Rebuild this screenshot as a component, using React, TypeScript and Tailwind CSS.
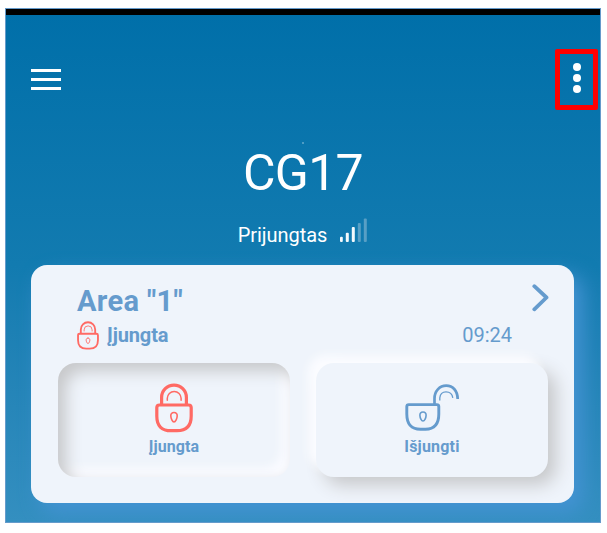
import React from "react";

function ClosedLock({ className }: { className: string }) {
  return (
    <svg viewBox="0 0 38 50" className={className} fill="none" stroke="#ff6a64" strokeLinecap="round">
      <path d="M6.6 21.5V14.5a12.4 12.4 0 0 1 24.8 0v7" strokeWidth="3.2" strokeLinecap="butt" />
      <path d="M4.5 22H33.5Q36.2 22 36.2 24.7V33Q36.2 47.7 22 47.7H16Q1.8 47.7 1.8 33V24.7Q1.8 22 4.5 22Z" strokeWidth="3.2" />
      <path d="M12.3 17.3v-2a6.9 6.9 0 0 1 13.8 0v2" strokeWidth="1.5" />
      <path d="M19 29.5c-2.2 0-3.3 1.5-3.2 3.5.1 2.3 1.6 5.9 3.2 5.9s3.1-3.6 3.2-5.9c.1-2-1-3.5-3.2-3.5Z" strokeWidth="1.6" />
    </svg>
  );
}

function OpenLock() {
  return (
    <svg viewBox="0 0 55 50" className="ml-px block h-[50px] w-[55px]" fill="none" stroke="#659bcd">
      <path d="M29.5 20.5V14.5c0-7.2 5-12.8 11.7-12.8 6.8 0 11.3 5 11.5 13.3" strokeWidth="2.7" />
      <path d="M3.8 20.6H31.8Q33.8 20.6 33.8 22.6V30Q33.8 45.2 20.5 45.2H15.5Q1.8 45.2 1.8 30V22.6Q1.8 20.6 3.8 20.6Z" strokeWidth="2.9" />
      <path d="M34.8 16.5v-2.6c.4-3.7 2.7-6 6.2-6 3.8 0 6.3 2.5 6.8 6" strokeWidth="1.3" />
      <path d="M18 28c-2.2 0-3.2 1.4-3.1 3.4.1 2.3 1.5 5.6 3.1 5.6s3-3.3 3.1-5.6c.1-2-.9-3.4-3.1-3.4Z" strokeWidth="1.6" />
    </svg>
  );
}

function Signal() {
  return (
    <svg viewBox="0 0 30 24" className="mt-[-1px] h-6 w-[30px]">
      <g fill="#f3f9fc">
        <rect x="1" y="18.7" width="2.8" height="5.3" rx="1" />
        <rect x="6.8" y="14.7" width="3" height="9.3" rx="1" />
        <rect x="12.8" y="9" width="3" height="15" rx="1" />
      </g>
      <g fill="#589fc5">
        <rect x="18.8" y="5" width="3" height="19" rx="1" />
        <rect x="24.8" y="0.5" width="3" height="23.5" rx="1" />
      </g>
    </svg>
  );
}

export default function App() {
  return (
    <div className="h-[533px] w-[607px] overflow-hidden bg-white pl-[5px] pt-2 font-['Roboto','Liberation_Sans',sans-serif]">
      <div className="h-[515px] w-[596px] overflow-hidden border border-[#659bcb] bg-linear-to-b from-[#006fa9] via-[#127bb0] to-[#348fc0]">
        <div className="h-1.5 bg-black" />

        <header className="flex h-[95px] justify-between pl-[25px] pr-[2px] pt-[34px]">
          <button aria-label="Menu" className="mt-5 flex h-[21px] w-[30px] flex-col justify-between">
            <span className="block h-[3px] w-full bg-white" />
            <span className="block h-[3px] w-full bg-white" />
            <span className="block h-[3px] w-full bg-white" />
          </button>
          <button aria-label="More options" className="flex h-[61px] w-[43px] flex-col items-center gap-[3px] rounded-[2px] border-[5px] border-[#ff0000] pt-[9px]">
            <span className="block size-2 rounded-full bg-white" />
            <span className="block size-2 rounded-full bg-white" />
            <span className="block size-2 rounded-full bg-white" />
          </button>
        </header>

        <div className="flex h-[154px] flex-col items-center pt-8 text-white">
          <span className="block size-[2px] rounded-full bg-[#65aacc]" />
          <h1 className="mt-[-1px] text-[50px] font-normal leading-[60px] tracking-[-0.7px]">CG17</h1>
          <div className="mt-[16px] flex h-6 gap-3 pl-px">
            <span className="pt-1 text-[20px] leading-6 tracking-[-0.05px]">Prijungtas</span>
            <Signal />
          </div>
        </div>

        <main className="ml-[25.4px] mt-px h-[238px] w-[543px] rounded-2xl bg-[#eff4fb] pl-[26.6px] pr-[26.4px] text-[#659bcd] shadow-[9px_10px_20px_#4493d3]">
          <div className="flex h-[97.5px] justify-between">
            <div className="pl-[19px] pt-[18px]">
              <h2 className="text-[29px] font-bold leading-[36px] tracking-[0.35px]">Area "1"</h2>
              <div className="mt-0.5 flex gap-2">
                <ClosedLock className="block h-[29px] w-[22px]" />
                <span className="text-[20px] font-bold leading-[28px] tracking-[-0.15px]">Įjungta</span>
              </div>
            </div>
            <div className="mr-[-2px] flex pt-[18px]">
              <time className="pt-[38px] text-[20px] leading-7">09:24</time>
              <svg viewBox="0 0 18 30" className="ml-5 h-[30px] w-[18px]" fill="none" stroke="#659bcd" strokeWidth="3.8" strokeLinecap="round" strokeLinejoin="round">
                <path d="M2.3 3.2 14.5 14.5 2.3 26.3" />
              </svg>
            </div>
          </div>
          <div className="flex gap-[26px]">
            <button className="flex h-[114.5px] w-[232px] flex-col items-center rounded-[18px] bg-[#eff4fb] pt-5 shadow-[inset_8px_8px_16px_#c7c8ca,inset_-9px_-9px_9px_#fafbff]">
              <ClosedLock className="block h-[50px] w-[38px]" />
              <span className="mt-[4.5px] text-[16px] font-bold leading-5 tracking-[0.1px]">Įjungta</span>
            </button>
            <button className="flex h-[114.5px] w-[232px] flex-col items-center rounded-[18px] bg-[#eff4fb] pt-[21px] shadow-[-8px_-8px_9px_#fbfcff,8px_8px_18px_#c6c7c9]">
              <OpenLock />
              <span className="mt-[3.5px] text-[16px] font-bold leading-5 tracking-[0.2px]">Išjungti</span>
            </button>
          </div>
        </main>
      </div>
    </div>
  );
}
